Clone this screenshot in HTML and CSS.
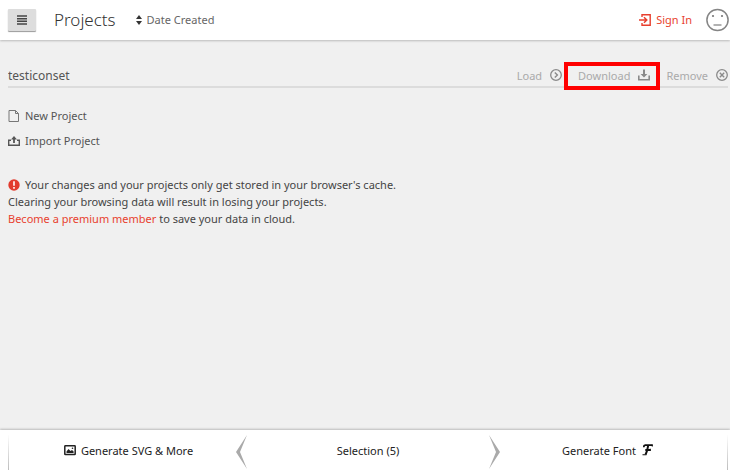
FILE: index.html
```
<!DOCTYPE html>
<html lang="en">
<head>
<meta charset="utf-8">
<title>Projects</title>
<link rel="stylesheet" href="styles.css">
</head>
<body>
<header class="topbar">
  <button class="menu" aria-label="Menu"><svg width="10" height="10" viewBox="0 0 10 10"><path d="M0 1h10M0 3.7h10M0 6.3h10M0 9h10" stroke="#444" stroke-width="1.6"/></svg></button>
  <h1 class="title">Projects</h1>
  <label class="sort">
    <svg width="6" height="10" viewBox="0 0 6 10"><path d="M0 4l3-4 3 4zM0 6l3 4 3-4z" fill="#333"/></svg>
    <select class="sort-select" aria-label="Sort by"><option>Date Created</option></select>
  </label>
  <a class="signin" href="#">
    <svg width="12" height="12" viewBox="0 0 12 12"><path d="M3 3V.8h8.2v10.4H3V9" fill="none" stroke="#e83f2e" stroke-width="1.4"/><path d="M0 6h7M5 3.2L7.8 6 5 8.8" fill="none" stroke="#e83f2e" stroke-width="1.5"/></svg>
    <span>Sign In</span>
  </a>
  <svg class="face" width="24" height="24" viewBox="0 0 24 24"><circle cx="12.500" cy="12" r="10.600" fill="none" stroke="#858585" stroke-width="1.5"/><circle cx="8" cy="8" r="1.100" fill="#777"/><circle cx="17" cy="8" r="1.100" fill="#777"/><path d="M8.500 17h8" stroke="#888" stroke-width="1.3"/></svg>
</header>
<main class="content">
  <div class="project">
    <input class="project-name" type="text" value="testiconset" aria-label="Project name">
    <button class="action">Load <svg width="12" height="12" viewBox="0 0 12 12"><circle cx="6" cy="6" r="5.3" fill="none" stroke="#8a8a8a" stroke-width="1.3"/><path d="M4.8 3.4L7.4 6 4.8 8.6" fill="none" stroke="#8a8a8a" stroke-width="1.4"/></svg></button>
    <button class="action marked">Download <svg width="12" height="12" viewBox="0 0 12 12"><path d="M.8 6.5v4.2h10.4V6.5" fill="none" stroke="#8a8a8a" stroke-width="1.6"/><path d="M5 .5h2V5h2.4L6 8.6 2.600 5H5z" fill="#8a8a8a"/></svg></button>
    <button class="action">Remove <svg width="12" height="12" viewBox="0 0 12 12"><circle cx="6" cy="6" r="5.3" fill="none" stroke="#8a8a8a" stroke-width="1.3"/><path d="M3.8 3.8l4.4 4.4M8.2 3.8L3.8 8.2" stroke="#8a8a8a" stroke-width="1.4"/></svg></button>
  </div>
  <div class="tools">
    <button class="tool"><svg width="12" height="12" viewBox="0 0 12 12"><path d="M1 .5h6.5L10.500 3.500V11.500H1zM7.500.5v3h3" fill="none" stroke="#777"/></svg>New Project</button>
    <button class="tool"><svg width="12" height="12" viewBox="0 0 12 12"><path d="M3 5.200H.7v5h10.600v-5H9" fill="none" stroke="#555" stroke-width="1.4"/><path d="M6 8V3" stroke="#555" stroke-width="1.8"/><path d="M3 4.400L6 1l3 3.400z" fill="#555"/></svg>Import Project</button>
  </div>
  <p class="notice"><svg class="alert" width="12" height="12" viewBox="0 0 12 12"><circle cx="6" cy="6" r="5.700" fill="#e23b2e"/><path d="M6 2.200v4.600M6 8v1.700" stroke="#fff" stroke-width="1.600"/></svg>Your changes and your projects only get stored in your browser's cache.<br>Clearing your browsing data will result in losing your projects.<br><a class="premium" href="#">Become a premium member</a> to save your data in cloud.</p>
</main>
<footer class="tabs">
  <button class="tab tab-prev"><svg width="12" height="12" viewBox="0 0 12 12"><rect x=".8" y="1.800" width="10.400" height="8.800" rx=".6" fill="none" stroke="#222" stroke-width="1.500"/><path d="M2.500 9V7.500L4.500 5l2 2 1.500-1 1.600 1.500V9z" fill="#222"/><circle cx="8.500" cy="4.300" r=".8" fill="#222"/></svg>Generate SVG &amp; More
    <svg class="chevron" width="12" height="34" viewBox="0 0 12 34"><path d="M11 0L0 17l11 17L4 17z" fill="#aaa"/></svg></button>
  <button class="tab">Selection (5)</button>
  <button class="tab tab-next">
    <svg class="chevron" width="12" height="34" viewBox="0 0 12 34"><path d="M1 0l11 17L1 34l7-17z" fill="#aaa"/></svg>
    Generate Font<svg width="12" height="12" viewBox="0 0 12 12"><path d="M4 1.200h7.500M2.800 3.200c0-1.300.6-2 1.700-2" fill="none" stroke="#111" stroke-width="1.700"/><path d="M7.200 1.200C6.600 5 6 8 4.500 10.600M4.300 6h5" fill="none" stroke="#111" stroke-width="2"/><path d="M1.500 10.800h4M11.300.4v2M9.300 4.800v2.200" stroke="#111" stroke-width="1.100"/></svg></button>
</footer>
</body>
</html>
```
FILE: styles.css
```
* { box-sizing: border-box; }
body {
  margin: 0;
  min-height: 100vh;
  display: flex;
  flex-direction: column;
  background: #f0f0f0;
  color: #444;
  font: 11px/17px "Noto Sans", sans-serif;
}
button, input, select {
  font: inherit;
  color: inherit;
  background: none;
  border: 0;
  padding: 0;
  margin: 0;
}
svg { flex: none; }
a { color: #e83f2e; text-decoration: none; }
.topbar {
  display: flex;
  align-items: center;
  height: 40px;
  padding: 0 1px 1px 8px;
  background: #fff;
  box-shadow: 0 1px 2px #bbb;
}
.menu {
  display: flex;
  align-items: center;
  justify-content: center;
  width: 28px;
  height: 22px;
  background: #ddd;
  border-radius: 1px;
  box-shadow: 0 1px 1px #999;
}
.title {
  margin: 0 20px 0 18px;
  font: 300 17px/24px "Noto Sans", "Open Sans", sans-serif;
  color: #333;
}
.sort { display: flex; align-items: center; gap: 5px; color: #666; }
.sort-select { appearance: none; }
.signin {
  display: flex;
  align-items: center;
  gap: 5px;
  margin-left: auto;
}
.face { margin-left: 13px; }
.content { flex: 1; padding: 22px 2px 0 8px; }
.project {
  display: flex;
  align-items: center;
  height: 26px;
  padding-top: 2px;
  border-bottom: 2px solid #dcdcdc;
}
.project-name { flex: 1; min-width: 0; height: 22px; color: #555; font-size: 12px; }
.action {
  position: relative;
  display: flex;
  align-items: center;
  gap: 8px;
  color: #aaa;
}
.action + .action { margin-left: 16px; }
.marked::after {
  content: "";
  position: absolute;
  inset: -5px -10px -6px -14px;
  border: 4px solid #f00;
}
.tools {
  display: flex;
  flex-direction: column;
  align-items: flex-start;
  gap: 8px;
  margin-top: 19px;
}
.tool { display: flex; align-items: center; gap: 5px; height: 17px; color: #555; }
.notice { margin: 27px 0 0; }
.alert { margin-right: 5px; vertical-align: -2px; }
.tabs {
  display: grid;
  grid-template-columns: repeat(3, 1fr);
  height: 40px;
  padding: 5px 2px 0 8px;
  background: #fff;
  box-shadow: 0 -1px 2px #bbb;
}
.tab {
  position: relative;
  display: flex;
  align-items: center;
  justify-content: center;
  gap: 5px;
  padding-bottom: 5px;
  color: #222;
}
.tab-prev, .tab-next {
  border: 0 solid;
  border-image: linear-gradient(#fff, #bbb) 1;
}
.tab-prev { border-left-width: 1px; }
.tab-next { border-right-width: 1px; }
.chevron { position: absolute; top: 0; }
.tab-prev .chevron { right: 0; }
.tab-next .chevron { left: 0; }
```
